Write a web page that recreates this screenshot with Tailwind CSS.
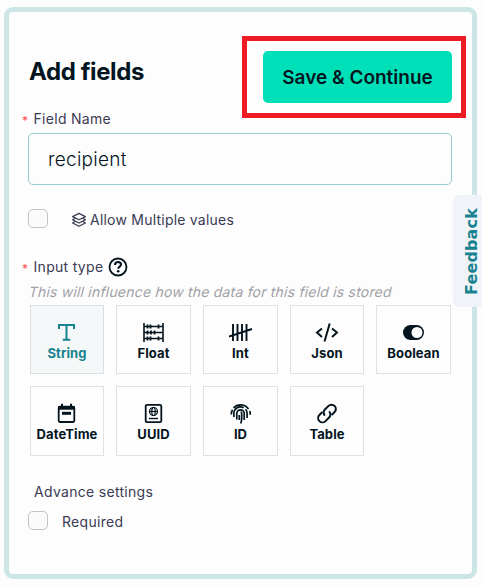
<!DOCTYPE html>
<html lang="en">
<head>
<meta charset="utf-8">
<title>Add fields</title>
<script src="https://cdn.jsdelivr.net/npm/@tailwindcss/browser@4"></script>
</head>
<body class="h-[587px] w-[482px] overflow-hidden bg-[#fdfdfd] pt-[7px] pl-1 font-['Inter',sans-serif] text-[#3b3b54]">
<main class="flex h-[572px] w-[473px] flex-col rounded-[9px] border-5 border-[#cce5e7] pr-5 pl-[19px]">
  <header class="mt-[39px] flex h-[52px] w-[424px] justify-between">
    <h1 class="pt-[3px] pl-px text-2xl leading-9 font-bold tracking-[-0.4px] text-[#04151f]">Add fields</h1>
    <div class="relative h-[52px] w-[189px]">
      <button class="h-full w-full rounded-[5px] bg-[#00e0b8] pt-[2px] text-[19px] font-semibold whitespace-nowrap text-[#04151f]">Save &amp; Continue</button>
      <div class="pointer-events-none absolute -top-[15px] -right-[14px] -bottom-[15px] -left-[21px] border-5 border-[#ed1c24]"></div>
    </div>
  </header>
  <label class="mt-1.5 -ml-[6px] flex h-5 items-center text-sm tracking-[0.3px]"><span class="w-[11.500px] pt-1 text-xs text-[#ff4d4f]">*</span>Field Name</label>
  <input class="mt-1 h-[52px] w-[424px] shrink-0 rounded-[5px] border border-[#9acbcf] bg-transparent px-[19px] text-[19px] font-light tracking-[0.25px] text-[#04151f] outline-none" value="recipient">

  <div class="mt-6 flex h-[19px] shrink-0 items-center">
    <span class="h-[19px] w-5 rounded-[5px] border border-[#c4c4c7] bg-[#fbfbfb]"></span>
    <svg class="mt-[3px] ml-[23px] h-4 w-4" viewBox="0 0 16 16" fill="none" stroke="#3b3b54" stroke-width="1.25" stroke-linejoin="round"><path d="M8 1.4 14.4 4.6 8 7.8 1.6 4.6ZM4 6.200 1.6 7.800 8 11l6.400-3.200L12 6.200M4 9.500l-2.400 1.500L8 14.300 14.400 11 12 9.500"/></svg>
    <span class="mt-[3px] ml-[3px] text-sm tracking-[0.22px]">Allow Multiple values</span>
  </div>

  <div class="mt-[29px] -ml-[6px] flex h-5 shrink-0 items-center text-sm tracking-[0.3px]"><span class="w-[11.500px] pt-1 text-xs text-[#ff4d4f]">*</span>Input type
    <svg class="ml-[5px] h-5 w-5" viewBox="0 0 20 20" fill="none" stroke="#04151f" stroke-width="1.8"><circle cx="10" cy="10" r="8.5"/><path d="M7 8c0-2 1.200-3 3-3s3 1 3 2.600c0 2-2.800 2-2.800 4.200" stroke-width="2.100"/><circle cx="10.200" cy="14.300" r="1.300" fill="#04151f" stroke="none"/></svg>
  </div>
  <p class="mt-[5px] ml-px h-5 w-fit shrink-0 -skew-x-[14deg] text-sm leading-5 tracking-[0.2px] whitespace-nowrap text-[#a1a1a6]">This will influence how the data for this field is stored</p>

  <div class="mt-[3px] ml-[2px] grid w-[421px] shrink-0 grid-cols-[74px_75px_75px_74px_75px] grid-rows-[69px_70px] gap-x-3 gap-y-3 text-[13px] leading-4 font-bold tracking-[0.1px] text-[#04151f]">
    <div class="flex flex-col items-center border border-[#dcdfe1] bg-[#f4f8f9] pt-[15px] text-[#17828f]">
      <svg class="h-6 w-6" viewBox="0 0 24 24" fill="none" stroke="currentColor" stroke-width="2"><path d="M4 8V4.100h15V8M11.500 4v14.700M7.800 18.700h7.400"/></svg>
      <span>String</span>
    </div>
    <div class="flex flex-col items-center border border-[#e1e1e3] pt-[15px]">
      <svg class="h-6 w-6" viewBox="0.500 0 24 24" fill="none" stroke="currentColor" stroke-width="1.6"><path d="M2.500 2v19M21.500 2v19M2.500 5.500h19M2.500 11.500h19M2.500 17.500h19" /><path stroke-width="1.800" d="M6 3.500v4M9 3.500v4M17 3.500v4M6 9.500v4M9.500 9.500v4M13 9.500v4M6 15.500v4M9 15.500v4M17 15.500v4"/></svg>
      <span>Float</span>
    </div>
    <div class="flex flex-col items-center border border-[#e1e1e3] pt-[15px]">
      <svg class="h-6 w-6" viewBox="0.500 0 24 24" fill="none" stroke="currentColor" stroke-width="1.9"><path d="M4.500 3v17M9 3v17M13.500 3v17M18 3v17M.500 15.500l23-7.500"/></svg>
      <span>Int</span>
    </div>
    <div class="flex flex-col items-center border border-[#e1e1e3] pt-[15px]">
      <svg class="h-6 w-6" viewBox="0 0 24 24" fill="none" stroke="currentColor" stroke-width="2"><path d="M7 7.500 2 11.500l5 4.500M17 7.500l5 4-5 4.500M14.700 2.500l-5.200 18"/></svg>
      <span>Json</span>
    </div>
    <div class="flex flex-col items-center border border-[#e1e1e3] pt-[15px]">
      <svg class="h-6 w-6" viewBox="0.500 0 24 24"><rect x="1.500" y="4" width="21" height="15" rx="7.500" fill="#04151f"/><circle cx="15.500" cy="11.500" r="5.500" fill="#fdfdfd"/></svg>
      <span>Boolean</span>
    </div>
    <div class="flex flex-col items-center border border-[#e1e1e3] pt-[15px]">
      <svg class="h-6 w-6" viewBox="0 0 24 24" fill="none" stroke="currentColor" stroke-width="1.8"><rect x="3.700" y="4.700" width="15.600" height="15.300" rx="1.200"/><path d="M3 6h17" stroke-width="3.500"/><path d="M7 1.800v4M16 1.800v4" stroke-width="2"/><path d="M7 11.300h9" stroke-width="3"/></svg>
      <span>DateTime</span>
    </div>
    <div class="flex flex-col items-center border border-[#e1e1e3] pt-[15px]">
      <svg class="h-6 w-6" viewBox="0.500 0 24 24" fill="none" stroke="currentColor" stroke-width="1.800"><rect x="4.200" y="2.800" width="15.600" height="17.400" rx="1.500"/><g stroke-width="1.200"><circle cx="12" cy="9.500" r="4"/><ellipse cx="12" cy="9.500" rx="1.700" ry="4"/><path d="M8 9.500h8"/></g><path d="M7.500 16.500h9" stroke-width="1.400"/></svg>
      <span>UUID</span>
    </div>
    <div class="flex flex-col items-center border border-[#e1e1e3] pt-[15px]">
      <svg class="h-6 w-6" viewBox="0.500 -0.500 24 24" fill="none" stroke="currentColor" stroke-width="1.7"><path d="M5 5.500A9.500 9.500 0 0 1 20 6.500M2.800 12c0-2 .4-3.500 1.200-4.800M21.300 8.500c.4 1.200.5 2.300.4 3.700M5.400 14.500V11a6.600 6.600 0 0 1 9.800-5.800M17 6.800c1.100 1.200 1.600 2.600 1.600 4.200V15.500M8.300 17v-6a3.700 3.700 0 0 1 7.400 0v6.500M10.800 12.500v5M12 9.500c.8 0 1.200.6 1.200 1.500v5c0 2-.4 3.500-1 5"/></svg>
      <span>ID</span>
    </div>
    <div class="flex flex-col items-center border border-[#e1e1e3] pt-[15px]">
      <svg class="h-6 w-6" viewBox="0 -0.500 24 24" fill="none" stroke="currentColor" stroke-width="2"><path d="M14.100 8.900a4.300 4.300 0 0 1 0 6.100l-3.600 3.600a4.300 4.300 0 0 1-6.100-6.100l3-3"/><path d="M9.900 13.100a4.300 4.300 0 0 1 0-6.100l3.600-3.600a4.300 4.300 0 0 1 6.100 6.100l-3 3"/></svg>
      <span>Table</span>
    </div>
  </div>

  <h2 class="mt-[26px] ml-[6px] h-5 shrink-0 text-sm leading-5 tracking-[0.300px]">Advance settings</h2>
  <div class="mt-[9px] flex h-[19px] shrink-0 items-center">
    <span class="h-[19px] w-5 rounded-[5px] border border-[#c4c4c7] bg-[#fbfbfb]"></span>
    <span class="mt-[3px] ml-3.5 text-sm tracking-[0.300px]">Required</span>
  </div>
</main>
<button class="absolute top-[195px] left-[453px] flex h-[112px] w-[34px] items-center justify-center rounded-l-[6px] bg-[#f0f4f9] pt-px pl-[3px] font-['DejaVu_Sans',sans-serif] text-base font-bold tracking-[0.15px] text-[#17828f]"><span class="rotate-180 [writing-mode:vertical-rl]">Feedback</span></button>
</body>
</html>
